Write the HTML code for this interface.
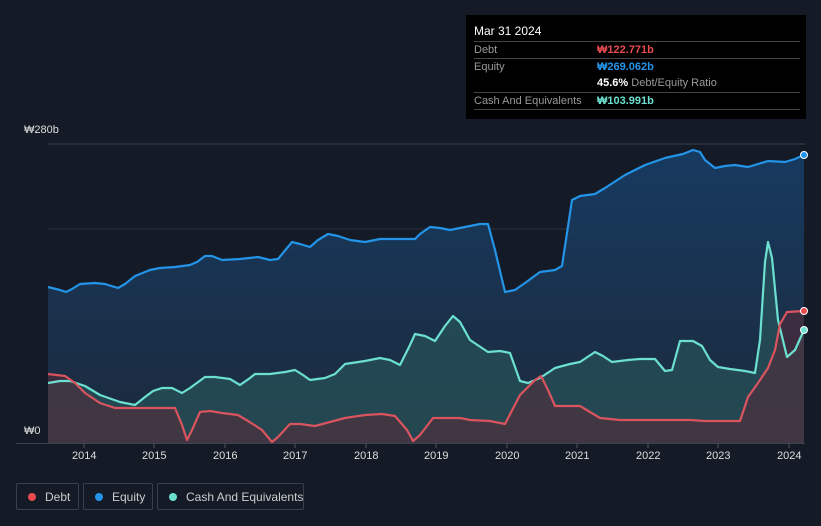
<!DOCTYPE html>
<html><head><style>
body{margin:0;width:821px;height:526px;background:#151b26;font-family:"Liberation Sans",sans-serif;overflow:hidden;position:relative}
.tt{position:absolute;left:466px;top:15px;width:340px;height:104px;background:#000;color:#fff;font-size:11px}
.tt .h{position:absolute;left:8px;top:9px;font-size:12px}
.row{position:absolute;left:8px;width:326px;border-top:1px solid #444;height:17px;line-height:17px;color:#999;white-space:nowrap}
.row span{position:absolute;left:123px}
.leg{position:absolute;top:483px;height:27px;border:1px solid #3a3f4a;border-radius:2px;color:#ccc;font-size:12px;line-height:26px;box-sizing:border-box;white-space:nowrap}
.leg i{position:absolute;left:11px;top:9px;width:8px;height:8px;border-radius:50%}
.ax{position:absolute;color:#ddd;font-size:11px;top:450px}
</style></head><body>
<svg width="821" height="526" style="position:absolute;left:0;top:0">
<defs>
<linearGradient id="ge" x1="0" y1="0" x2="0" y2="1"><stop offset="0" stop-color="#173a60"/><stop offset="1" stop-color="#1c2a3c"/></linearGradient>
</defs>
<line x1="48" y1="144" x2="805" y2="144" stroke="#3a404c"/>
<line x1="48" y1="229" x2="805" y2="229" stroke="#2a303c"/>
<line x1="48" y1="336" x2="805" y2="336" stroke="#2a303c"/>
<polygon fill="url(#ge)" points="48,443 48,287 60,290 66,292 72,289 80,284 95,283 105,284 118,288 125,284 135,276 150,270 160,268 175,267 190,265 197,262 205,256 212,256 222,260 240,259 258,257 270,260 278,259 292,242 300,244 310,247 318,240 328,234 338,236 350,240 365,242 380,239 395,239 415,239 420,234 430,227 440,228 450,230 460,228 470,226 480,224 488,224 495,250 505,292 515,290 525,283 540,272 555,270 562,266 572,200 580,196 595,194 605,188 625,175 645,165 665,158 683,154 693,150 700,152 705,160 715,168 725,166 735,165 748,167 758,164 768,161 785,162 795,159 804,155 804,443"/>
<polygon fill="#2a5a5e" fill-opacity=".6" points="48,443 48,383 60,381 70,381 85,386 100,395 120,402 135,405 145,397 153,391 162,388 172,388 182,393 190,388 205,377 215,377 230,379 240,385 250,378 255,374 270,374 285,372 295,370 303,375 310,380 325,378 335,374 345,364 365,361 380,358 390,360 400,365 410,345 415,334 425,336 435,341 445,326 453,316 460,322 470,340 488,352 500,351 510,353 520,381 528,383 540,378 555,368 570,364 580,362 595,352 603,356 612,362 628,360 640,359 655,359 665,371 672,370 680,341 693,341 702,346 710,360 718,367 730,369 745,371 755,373 760,340 765,262 768,242 772,258 778,320 787,357 795,350 804,330 804,443"/>
<polygon fill="#5a2a38" fill-opacity=".55" points="48,443 48,374 65,376 75,383 85,393 100,403 115,408 140,408 175,408 182,425 187,440 192,430 200,412 210,411 222,413 238,415 248,421 262,430 272,442 278,437 290,424 300,424 315,426 330,422 345,418 365,415 382,414 395,416 407,430 413,441 420,435 433,418 460,418 470,420 490,421 505,424 520,395 535,380 541,376 548,390 555,406 580,406 590,412 600,418 620,420 660,420 690,420 705,421 740,421 748,397 758,383 768,368 775,350 780,324 787,312 804,311 804,443"/>
<polyline fill="none" stroke="#2394e8" stroke-width="2.2" stroke-linejoin="round" points="48,287 60,290 66,292 72,289 80,284 95,283 105,284 118,288 125,284 135,276 150,270 160,268 175,267 190,265 197,262 205,256 212,256 222,260 240,259 258,257 270,260 278,259 292,242 300,244 310,247 318,240 328,234 338,236 350,240 365,242 380,239 395,239 415,239 420,234 430,227 440,228 450,230 460,228 470,226 480,224 488,224 495,250 505,292 515,290 525,283 540,272 555,270 562,266 572,200 580,196 595,194 605,188 625,175 645,165 665,158 683,154 693,150 700,152 705,160 715,168 725,166 735,165 748,167 758,164 768,161 785,162 795,159 804,155"/>
<polyline fill="none" stroke="#6ce0d0" stroke-width="2.2" stroke-linejoin="round" points="48,383 60,381 70,381 85,386 100,395 120,402 135,405 145,397 153,391 162,388 172,388 182,393 190,388 205,377 215,377 230,379 240,385 250,378 255,374 270,374 285,372 295,370 303,375 310,380 325,378 335,374 345,364 365,361 380,358 390,360 400,365 410,345 415,334 425,336 435,341 445,326 453,316 460,322 470,340 488,352 500,351 510,353 520,381 528,383 540,378 555,368 570,364 580,362 595,352 603,356 612,362 628,360 640,359 655,359 665,371 672,370 680,341 693,341 702,346 710,360 718,367 730,369 745,371 755,373 760,340 765,262 768,242 772,258 778,320 787,357 795,350 804,330"/>
<polyline fill="none" stroke="#d9545e" stroke-width="2.2" stroke-linejoin="round" points="48,374 65,376 75,383 85,393 100,403 115,408 140,408 175,408 182,425 187,440 192,430 200,412 210,411 222,413 238,415 248,421 262,430 272,442 278,437 290,424 300,424 315,426 330,422 345,418 365,415 382,414 395,416 407,430 413,441 420,435 433,418 460,418 470,420 490,421 505,424 520,395 535,380 541,376 548,390 555,406 580,406 590,412 600,418 620,420 660,420 690,420 705,421 740,421 748,397 758,383 768,368 775,350 780,324 787,312 804,311"/>
<circle cx="804" cy="155" r="3.5" fill="#2394e8" stroke="#fff" stroke-width="1"/>
<circle cx="804" cy="311" r="3.5" fill="#e84a50" stroke="#fff" stroke-width="1"/>
<circle cx="804" cy="330" r="3.5" fill="#6ce0d0" stroke="#fff" stroke-width="1"/>
<line x1="16" y1="443.5" x2="805" y2="443.5" stroke="#3a404c"/>
<g stroke="#555"><line x1="84" y1="443" x2="84" y2="448"/><line x1="154" y1="443" x2="154" y2="448"/><line x1="225" y1="443" x2="225" y2="448"/><line x1="295" y1="443" x2="295" y2="448"/><line x1="366" y1="443" x2="366" y2="448"/><line x1="436" y1="443" x2="436" y2="448"/><line x1="507" y1="443" x2="507" y2="448"/><line x1="577" y1="443" x2="577" y2="448"/><line x1="648" y1="443" x2="648" y2="448"/><line x1="718" y1="443" x2="718" y2="448"/><line x1="789" y1="443" x2="789" y2="448"/></g>
<rect x="16" y="422" width="32" height="20" fill="#151b26"/>
</svg>
<div style="position:absolute;left:24px;top:124px;color:#ddd;font-size:11px">₩280b</div>
<div style="position:absolute;left:24px;top:425px;color:#ddd;font-size:11px">₩0</div>
<div class="ax" style="left:72px">2014</div><div class="ax" style="left:142px">2015</div><div class="ax" style="left:213px">2016</div><div class="ax" style="left:283px">2017</div><div class="ax" style="left:354px">2018</div><div class="ax" style="left:424px">2019</div><div class="ax" style="left:495px">2020</div><div class="ax" style="left:565px">2021</div><div class="ax" style="left:636px">2022</div><div class="ax" style="left:706px">2023</div><div class="ax" style="left:777px">2024</div>
<div class="tt">
<div class="h">Mar 31 2024</div>
<div class="row" style="top:26px">Debt<span style="color:#e84a50;font-weight:bold">₩122.771b</span></div>
<div class="row" style="top:43px">Equity<span style="color:#2394e8;font-weight:bold">₩269.062b</span></div>
<div class="row" style="top:60px;border-top:none"><span style="color:#999"><b style="color:#fff">45.6%</b> Debt/Equity Ratio</span></div>
<div class="row" style="top:77px">Cash And Equivalents<span style="color:#6ce0d0;font-weight:bold">₩103.991b</span></div>
<div class="row" style="top:94px;height:0"></div>
</div>
<div class="leg" style="left:16px;width:63px"><i style="background:#e84a50"></i><span style="position:absolute;left:28px">Debt</span></div>
<div class="leg" style="left:83px;width:70px"><i style="background:#2394e8"></i><span style="position:absolute;left:28px">Equity</span></div>
<div class="leg" style="left:157px;width:147px"><i style="background:#6ce0d0"></i><span style="position:absolute;left:28px">Cash And Equivalents</span></div>
</body></html>
